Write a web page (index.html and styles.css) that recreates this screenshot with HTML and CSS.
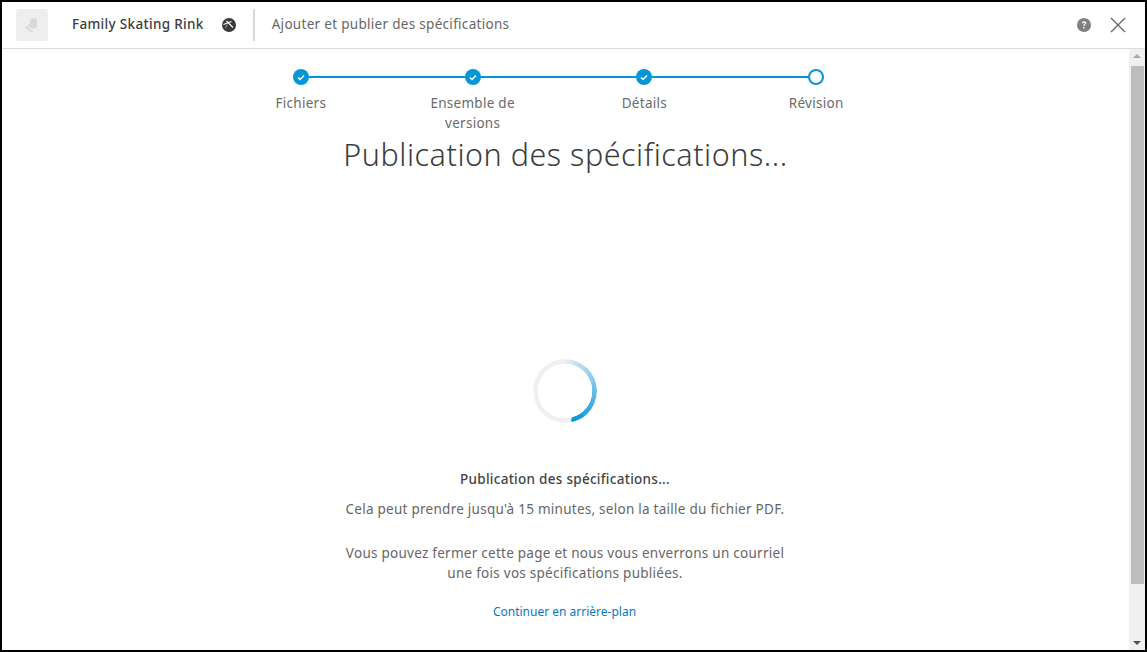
FILE: index.html
```html
<!DOCTYPE html>
<html lang="fr">
<head>
<meta charset="utf-8">
<title>Ajouter et publier des spécifications</title>
<link rel="stylesheet" href="styles.css">
</head>
<body>
<div class="frame">
  <header class="topbar">
    <div class="logo">
      <svg width="32" height="32" viewBox="0 0 32 32"><path d="M14 11l3-2 4 1v8l-3 2-4-1z" fill="#d8d8d8"/><path d="M16 14.500L10.500 18.500 16.500 23" stroke="#dadada" stroke-width="2" fill="none"/></svg>
    </div>
    <span class="project">Family Skating Rink</span>
    <svg class="globe" width="14" height="14" viewBox="0 0 14 14"><circle cx="7" cy="7" r="7" fill="#3a3a3a"/><path d="M1.500 6.500L9.500 3.500M4.500 3L11 9.500" stroke="#fff" stroke-width="1.100" fill="none"/><path d="M5 6.500L3.500 10" stroke="#bbb" stroke-width=".8" fill="none"/></svg>
    <div class="divider"></div>
    <span class="crumb">Ajouter et publier des spécifications</span>
    <div class="actions">
      <svg width="14" height="14" viewBox="0 0 14 14"><circle cx="7" cy="7" r="7" fill="#808080"/><path d="M4.900 5.300C4.900 4 5.900 3.200 7.100 3.200 8.400 3.200 9.300 4 9.300 5.100 9.300 6.500 7.500 6.600 7.500 8.100H6.300C6.300 6.200 7.900 6.100 7.900 5.200 7.900 4.700 7.600 4.400 7.100 4.400 6.600 4.400 6.200 4.800 6.200 5.300z" fill="#fff"/><rect x="6.200" y="9" width="1.400" height="1.500" fill="#fff"/></svg>
      <svg class="close" width="16" height="16" viewBox="0 0 16 16"><path d="M1 1l14 14M15 1L1 15" stroke="#666" stroke-width="1.300" fill="none"/></svg>
    </div>
  </header>
  <div class="body">
    <main class="content">
      <ol class="stepper">
        <li class="step done"><span class="dot"><svg width="8" height="7" viewBox="0 0 8 7"><path d="M1 3.500l2 2 4-4" stroke="#fff" stroke-width="1.500" fill="none"/></svg></span><span class="label">Fichiers</span></li>
        <li class="step done"><span class="dot"><svg width="8" height="7" viewBox="0 0 8 7"><path d="M1 3.500l2 2 4-4" stroke="#fff" stroke-width="1.500" fill="none"/></svg></span><span class="label">Ensemble de versions</span></li>
        <li class="step done"><span class="dot"><svg width="8" height="7" viewBox="0 0 8 7"><path d="M1 3.500l2 2 4-4" stroke="#fff" stroke-width="1.500" fill="none"/></svg></span><span class="label">Détails</span></li>
        <li class="step current"><span class="dot"></span><span class="label">Révision</span></li>
      </ol>
      <h1 class="title">Publication des spécifications...</h1>
      <div class="spinner"></div>
      <p class="status">Publication des spécifications...</p>
      <p class="info">Cela peut prendre jusqu'à 15 minutes, selon la taille du fichier PDF.</p>
      <p class="info notice">Vous pouvez fermer cette page et nous vous enverrons un courriel<br>une fois vos spécifications publiées.</p>
      <a class="bg-link" href="#">Continuer en arrière-plan</a>
    </main>
    <div class="scrollbar">
      <span class="arrow up"></span>
      <div class="track"><div class="thumb"></div></div>
      <span class="arrow down"></span>
    </div>
  </div>
</div>
</body>
</html>
```
FILE: styles.css
```css
* { box-sizing: border-box; }
html, body { height: 100%; margin: 0; }
body { font-family: "Noto Sans", "Open Sans", sans-serif; color: #666; background: #000; overflow: hidden; }
.frame { height: 652px; border: 2px solid #000; background: #fff; display: flex; flex-direction: column; }
.topbar { height: 47px; flex: none; border-bottom: 1px solid #dcdcdc; display: flex; align-items: center; padding-left: 14px; }
.logo { width: 32px; height: 32px; background: #eeeeee; border-radius: 3px; flex: none; }
.logo svg { display: block; }
.project { margin: 0 0 2px 24px; font-size: 13.5px; font-weight: 500; color: #3c3c3c; letter-spacing: .32px; }
.globe { margin-left: 18px; flex: none; }
.divider { width: 2px; height: 32px; background: #d9d9d9; margin-left: 17px; flex: none; }
.crumb { margin: 0 0 2px 17px; font-size: 13.5px; color: #666; letter-spacing: .3px; }
.actions { margin-left: auto; display: flex; align-items: center; gap: 19px; padding-right: 19px; }
.actions svg { display: block; }
.body { flex: 1; min-height: 0; display: flex; }
.content { flex: 1; min-width: 0; display: flex; flex-direction: column; align-items: center; }
.stepper { list-style: none; margin: 20px 14px 0 0; padding: 0; display: flex; width: 687px; }
.step { flex: 1; position: relative; display: flex; flex-direction: column; align-items: center; text-align: center; }
.step::before { content: ""; position: absolute; top: 7px; left: 50%; width: 100%; height: 2px; background: #0696d7; }
.step:last-child::before { display: none; }
.dot { position: relative; width: 16px; height: 16px; border-radius: 50%; background: #0696d7; display: flex; align-items: center; justify-content: center; }
.current .dot { background: #fff; border: 2px solid #0696d7; }
.label { width: 100px; margin-top: 8px; font-size: 13.5px; line-height: 20px; color: #6a6a6a; letter-spacing: .28px; }
.title { margin: 0; font-size: 30.5px; line-height: 42px; font-weight: 300; color: #3c3c3c; letter-spacing: .52px; }
.spinner { position: relative; width: 64px; height: 64px; margin: 184px 1px 0 0; border-radius: 50%;
  background: conic-gradient(from 0deg, #eef1f3 0deg, #d5e8f2 10deg, #0696d7 164deg, #eef1f3 165deg);
  -webkit-mask: radial-gradient(circle, transparent 27px, #000 27.5px);
  mask: radial-gradient(circle, transparent 27px, #000 27.5px); }
.spinner::after { content: ""; position: absolute; left: 37.5px; top: 58.5px; width: 4.5px; height: 4.5px; border-radius: 50%; background: #0696d7; }
.status { margin: 46px 1px 0 0; font-size: 13.5px; line-height: 20px; font-weight: 500; color: #444; letter-spacing: .28px; }
.info { margin: 10px 1px 0 0; font-size: 13.5px; line-height: 20px; text-align: center; color: #666; letter-spacing: .26px; }
.notice { margin-top: 24px; }
.bg-link { margin: 20px 2px 0 0; font-size: 12px; line-height: 18px; color: #0a78be; text-decoration: none; }
.scrollbar { width: 16px; flex: none; background: #f0f0f0; display: flex; flex-direction: column; align-items: center; }
.arrow { flex: none; width: 0; height: 0; margin: 5px 0; border-left: 4px solid transparent; border-right: 4px solid transparent; }
.arrow.up { border-bottom: 4px solid #a8a8a8; margin-bottom: 8px; }
.arrow.down { border-top: 4px solid #505050; margin-top: 6px; }
.track { flex: 1; width: 100%; padding: 0 1px 0 2px; }
.thumb { height: 518px; background: #bdbdbd; }
```
